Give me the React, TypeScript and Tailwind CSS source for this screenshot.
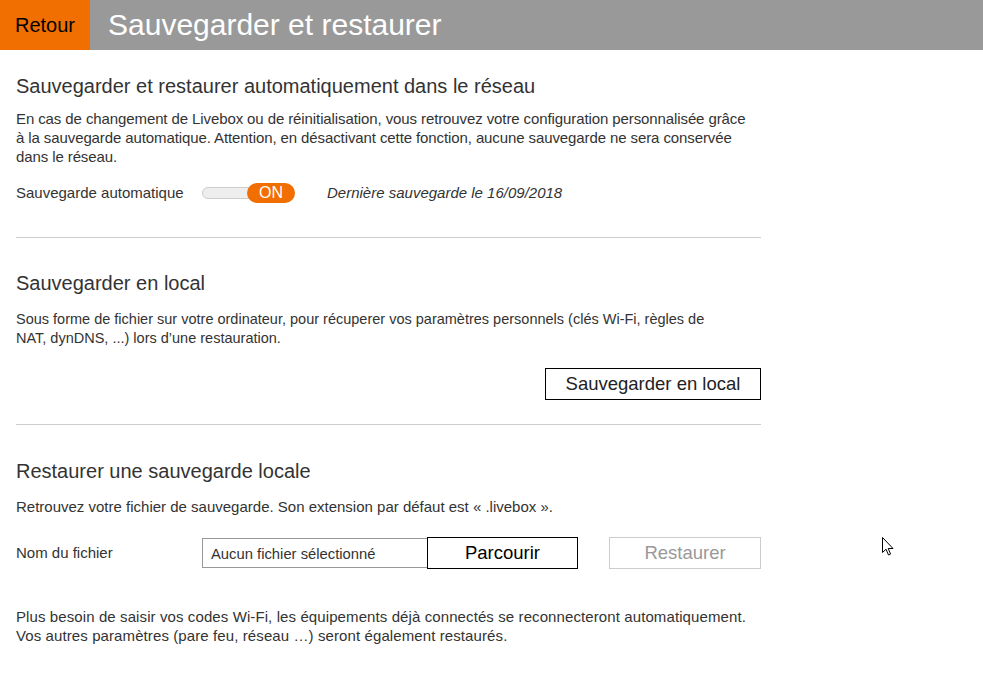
export default function App() {
  return (
    <div
      className="relative min-h-[673px] bg-white text-[#333]"
      style={{ fontFamily: '"Liberation Sans", Arial, sans-serif' }}
    >
      {/* Top bar */}
      <div className="flex h-[50px] bg-[#999999]">
        <button className="flex h-full w-[90px] items-center justify-center bg-[#f16e00] text-[20px] text-black">
          Retour
        </button>
        <h1 className="flex items-center pl-[18px] text-[30px] leading-none text-white">
          Sauvegarder et restaurer
        </h1>
      </div>

      <div className="w-[761px] pl-4">
        {/* Section 1 */}
        <section className="pt-[24px] pb-[33px]">
          <h2 className="text-[20px] leading-[24px]">
            Sauvegarder et restaurer automatiquement dans le réseau
          </h2>
          <p className="mt-[11px] text-[15px] leading-[19px] tracking-[-0.1px]">
            En cas de changement de Livebox ou de réinitialisation, vous retrouvez votre configuration personnalisée grâce
            <br />
            à la sauvegarde automatique. Attention, en désactivant cette fonction, aucune sauvegarde ne sera conservée
            <br />
            dans le réseau.
          </p>
          <div className="mt-[16px] flex h-[22px] items-center text-[15px]">
            <span className="w-[186px]">Sauvegarde automatique</span>
            <div className="flex w-[93px] items-center">
              <div className="-mr-[3px] h-[12px] w-[48px] rounded-l-full border border-[#ccc] bg-[#eeeeee]" />
              <div className="flex h-[20px] w-[48px] items-center justify-center rounded-full bg-[#f16e00] text-[16px] text-white">
                ON
              </div>
            </div>
            <span className="ml-[32px] italic">Dernière sauvegarde le 16/09/2018</span>
          </div>
        </section>

        <div className="h-px bg-[#cccccc]" />

        {/* Section 2 */}
        <section className="pt-[33px] pb-[24px]">
          <h2 className="text-[20px] leading-[24px]">Sauvegarder en local</h2>
          <p className="mt-[15px] text-[14.5px] leading-[19px]">
            Sous forme de fichier sur votre ordinateur, pour récuperer vos paramètres personnels (clés Wi-Fi, règles de
            <br />
            NAT, dynDNS, ...) lors d’une restauration.
          </p>
          <div className="mt-[20px] flex justify-end">
            <button className="h-[32px] w-[216px] border border-black text-[18.5px] text-[#222]">
              Sauvegarder en local
            </button>
          </div>
        </section>

        <div className="h-px bg-[#cccccc]" />

        {/* Section 3 */}
        <section className="pt-[34px]">
          <h2 className="text-[20px] leading-[24px]">Restaurer une sauvegarde locale</h2>
          <p className="mt-[14px] text-[15px] leading-[19px]">
            Retrouvez votre fichier de sauvegarde. Son extension par défaut est « .livebox ».
          </p>
          <div className="mt-[21px] flex h-[32px] items-center text-[15px]">
            <span className="w-[186px]">Nom du fichier</span>
            <div className="flex h-[30px] w-[226px] items-center border border-[#999] pl-[8px] pt-[3px] text-[14.8px]">
              Aucun fichier sélectionné
            </div>
            <button className="-ml-px h-[32px] w-[151px] border border-black text-[18.5px] text-black">
              Parcourir
            </button>
            <button className="ml-[31px] h-[32px] w-[152px] border border-[#cccccc] text-[18.5px] text-[#999]">
              Restaurer
            </button>
          </div>
          <p className="mt-[38px] text-[15px] leading-[19px] tracking-[0.1px]">
            Plus besoin de saisir vos codes Wi-Fi, les équipements déjà connectés se reconnecteront automatiquement.
            <br />
            Vos autres paramètres (pare feu, réseau …) seront également restaurés.
          </p>
        </section>
      </div>

      {/* Mouse pointer */}
      <svg className="absolute left-[882px] top-[537px]" width="13" height="20" viewBox="0 0 13 20">
        <path
          d="M0.5 0.5 L0.5 15.5 L4 12.2 L6.5 18 L8.6 17.1 L6.2 11.5 L11 11.5 Z"
          fill="white"
          stroke="black"
          strokeWidth="1"
          strokeLinejoin="round"
        />
      </svg>
    </div>
  );
}
